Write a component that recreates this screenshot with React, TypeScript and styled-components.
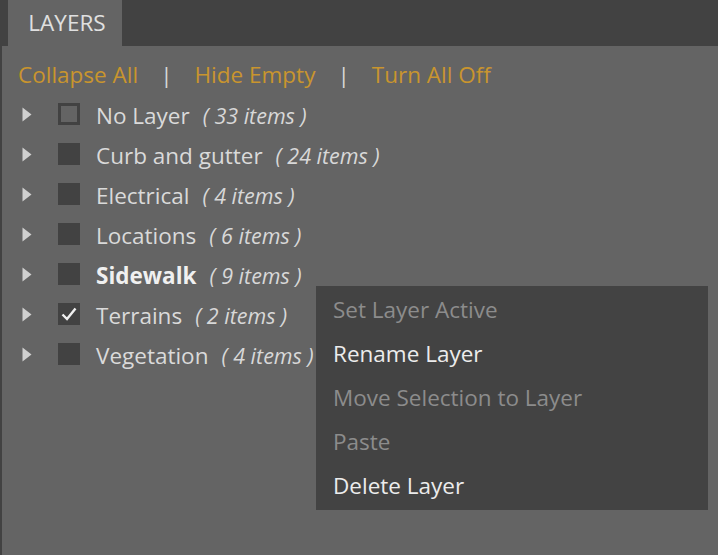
import React from 'react';
import styled, { createGlobalStyle } from 'styled-components';

const layers = [
  { id: 1, name: 'No Layer', count: 33, state: 'none' },
  { id: 2, name: 'Curb and gutter', count: 24, state: 'off' },
  { id: 3, name: 'Electrical', count: 4, state: 'off' },
  { id: 4, name: 'Locations', count: 6, state: 'off' },
  { id: 5, name: 'Sidewalk', count: 9, state: 'off', active: true },
  { id: 6, name: 'Terrains', count: 2, state: 'on' },
  { id: 7, name: 'Vegetation', count: 4, state: 'off' },
];

const menuItems = [
  { label: 'Set Layer Active', disabled: true },
  { label: 'Rename Layer', disabled: false },
  { label: 'Move Selection to Layer', disabled: true },
  { label: 'Paste', disabled: true },
  { label: 'Delete Layer', disabled: false },
];

const GlobalStyle = createGlobalStyle`
  html, body {
    margin: 0;
    padding: 0;
    background: #424242;
    font-family: "Open Sans", "Noto Sans", sans-serif;
  }
`;

const App: React.FC = () => {
  return (
    <Page>
      <GlobalStyle />
      <TabBar>
        <Tab>LAYERS</Tab>
      </TabBar>
      <Panel>
        <Toolbar>
          <ToolLink>Collapse All</ToolLink>
          <Sep>|</Sep>
          <ToolLink>Hide Empty</ToolLink>
          <Sep>|</Sep>
          <ToolLink>Turn All Off</ToolLink>
        </Toolbar>
        <List>
          {layers.map(({ id, name, count, state, active }) => (
            <Row key={id}>
              <Arrow>
                <svg width="10" height="15" viewBox="0 0 10 15">
                  <path d="M0.5 0.5 L9.5 7.5 L0.5 14.5 Z" fill="#d0d0d0" />
                </svg>
              </Arrow>
              <Check $hollow={state === 'none'}>
                {state === 'on' && (
                  <svg width="18" height="18" viewBox="0 0 18 18">
                    <path d="M2.5 9.5 L7 14 L15.5 3.5" fill="none" stroke="#f0f0f0" strokeWidth="2.4" />
                  </svg>
                )}
              </Check>
              <Name $active={!!active}>{name}</Name>
              <Count>( {count} items )</Count>
            </Row>
          ))}
        </List>
        <Menu>
          {menuItems.map(({ label, disabled }) => (
            <MenuItem key={label} $disabled={disabled}>
              {label}
            </MenuItem>
          ))}
        </Menu>
      </Panel>
    </Page>
  );
};

const Page = styled.div`
  width: 718px;
  height: 555px;
  background: #424242;
  display: flex;
  flex-direction: column;
  overflow: hidden;
`;

const TabBar = styled.div`
  height: 46px;
  display: flex;
  padding-left: 8px;
`;

const Tab = styled.div`
  width: 114px;
  background: #646464;
  color: #e0e0e0;
  font-size: 22.5px;
  display: flex;
  align-items: center;
  justify-content: center;
  padding: 0 0 2px 4px;
  box-sizing: border-box;
`;

const Panel = styled.div`
  position: relative;
  flex: 1;
  margin-left: 2px;
  background: #646464;
  padding: 14px 0 0 16px;
`;

const Toolbar = styled.div`
  display: flex;
  align-items: center;
  height: 28px;
`;

const ToolLink = styled.span`
  color: #c9952e;
  font-size: 22.5px;
`;

const Sep = styled.span`
  color: #d8d8d8;
  font-size: 22.5px;
  margin: 0 22px;
`;

const List = styled.div`
  margin-top: 7px;
  display: flex;
  flex-direction: column;
`;

const Row = styled.div`
  height: 40px;
  display: flex;
  align-items: center;
`;

const Arrow = styled.span`
  width: 36px;
  padding-left: 4px;
  display: flex;
  align-items: center;
  margin-top: -2px;
`;

const Check = styled.span<{ $hollow: boolean }>`
  width: 22px;
  height: 22px;
  box-sizing: border-box;
  background: ${({ $hollow }) => ($hollow ? '#646464' : '#424242')};
  border: ${({ $hollow }) => ($hollow ? '3px solid #424242' : 'none')};
  display: flex;
  align-items: center;
  justify-content: center;
  margin-right: 16px;
  margin-top: -3px;
`;

const Name = styled.span<{ $active: boolean }>`
  color: ${({ $active }) => ($active ? '#f0f0f0' : '#dadada')};
  font-weight: ${({ $active }) => ($active ? 700 : 400)};
  font-size: 22.5px;
  margin-right: 13px;
`;

const Count = styled.span`
  color: #d8d8d8;
  font-style: italic;
  font-size: 21.5px;
`;

const Menu = styled.div`
  position: absolute;
  left: 314px;
  top: 240px;
  width: 392px;
  padding: 1px 0 3px;
  background: #434343;
  box-sizing: border-box;
`;

const MenuItem = styled.div<{ $disabled: boolean }>`
  height: 44px;
  display: flex;
  align-items: center;
  padding-left: 17px;
  font-size: 22.5px;
  color: ${({ $disabled }) => ($disabled ? '#8c8c8c' : '#ececec')};
`;

export default App;
